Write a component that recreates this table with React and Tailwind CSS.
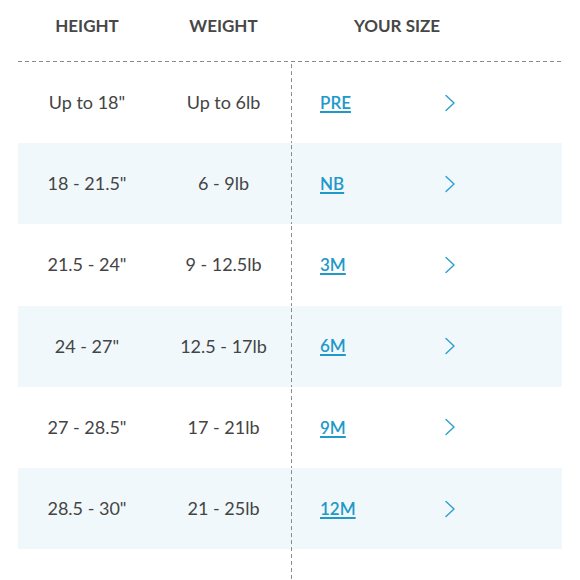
import React from "react";

const rows = [
  { height: 'Up to 18"', weight: "Up to 6lb", size: "PRE" },
  { height: '18 - 21.5"', weight: "6 - 9lb", size: "NB" },
  { height: '21.5 - 24"', weight: "9 - 12.5lb", size: "3M" },
  { height: '24 - 27"', weight: "12.5 - 17lb", size: "6M" },
  { height: '27 - 28.5"', weight: "17 - 21lb", size: "9M" },
  { height: '28.5 - 30"', weight: "21 - 25lb", size: "12M" },
];

const vDash =
  "bg-[linear-gradient(to_bottom,#8a8a8a_4px,transparent_4px)] bg-[length:1px_7px] bg-repeat-y bg-left";

function Chevron() {
  return (
    <svg width="12" height="18" viewBox="0 0 12 18" fill="none">
      <path
        d="M2 1.5 L10 9 L2 16.5"
        stroke="#2b9fcf"
        strokeWidth="1.4"
        strokeLinecap="round"
        strokeLinejoin="round"
      />
    </svg>
  );
}

function SizeRow({ row, shaded }) {
  return (
    <div className={`flex h-[81.2px] ${shaded ? "bg-[#f1f8fc]" : "bg-white"}`}>
      <div className="w-[138px] flex items-center justify-center">{row.height}</div>
      <div className="w-[135px] flex items-center justify-center">{row.weight}</div>
      <div className={`flex-1 flex items-center pl-[29px] ${vDash}`}>
        <a
          href="#"
          className="w-[124px] text-[17px] font-semibold text-[#2199c8] underline decoration-2 underline-offset-[2px]"
        >
          {row.size}
        </a>
        <Chevron />
      </div>
    </div>
  );
}

export default function App() {
  return (
    <div className="w-[580px] h-[580px] bg-white flex flex-col px-[18px] font-['Lato','Open_Sans',sans-serif] text-[18px] text-[#444]">
      <div className="h-[62px] shrink-0 flex flex-col">
        <div className="flex-1 flex items-center text-[17px] font-bold text-[#474747] pb-[9px]">
          <div className="w-[138px] text-center">HEIGHT</div>
          <div className="w-[135px] text-center">WEIGHT</div>
          <div className="w-[212px] text-center">YOUR SIZE</div>
        </div>
        <div className="h-px bg-[linear-gradient(to_right,#8a8a8a_4px,transparent_4px)] bg-[length:7px_1px] bg-repeat-x"></div>
      </div>
      {rows.map((row, i) => (
        <SizeRow key={row.size} row={row} shaded={i % 2 === 1} />
      ))}
      <div className="flex-1 flex">
        <div className="w-[273px]"></div>
        <div className={`flex-1 ${vDash}`}></div>
      </div>
    </div>
  );
}
